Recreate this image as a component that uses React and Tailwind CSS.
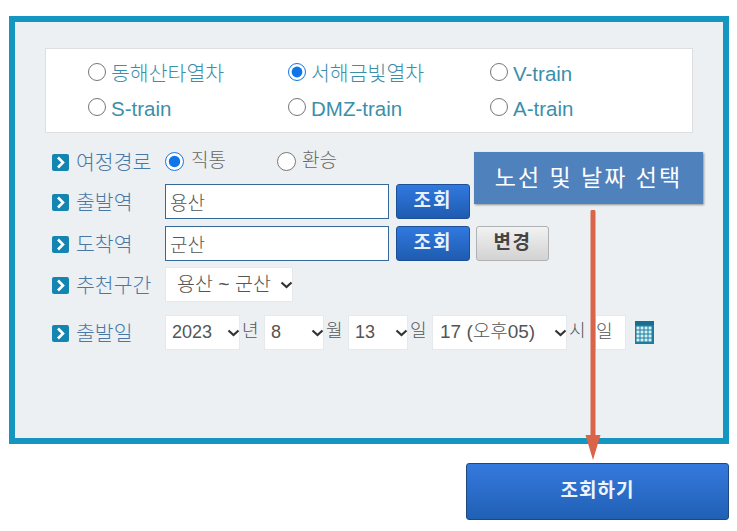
const font = { fontFamily: '"Liberation Sans", "Noto Sans CJK KR", sans-serif' };

const routes = [
  { name: "동해산타열차" },
  { name: "서해금빛열차", checked: true },
  { name: "V-train" },
  { name: "S-train" },
  { name: "DMZ-train" },
  { name: "A-train" },
];

const RowLabel = ({ children }) => (
  <div className="flex w-[120px] shrink-0 items-center pl-[7px]">
    <svg width="17" height="17" viewBox="0 0 17 17" className="relative top-[1px] shrink-0">
      <rect width="17" height="17" rx="2" fill="#1485b0" />
      <path d="M6 3.5 L11 8.5 L6 13.5" fill="none" stroke="#fff" strokeWidth="2.6" />
    </svg>
    <span className="relative top-[2px] ml-[7px] text-[20.5px] leading-none font-light whitespace-nowrap text-[#4a78a6]">{children}</span>
  </div>
);

const BlueButton = ({ children }) => (
  <button className="ml-[7px] h-[35px] w-[74px] rounded-[3px] border border-[#1c4f96] bg-gradient-to-b from-[#3079e0] to-[#1f5cb0] text-[19px] font-bold tracking-[2px] text-[#e8f0fa]">
    {children}
  </button>
);

const TextInput = ({ value }) => (
  <input
    readOnly
    value={value}
    className="h-[35px] w-[224px] border border-[#34699a] bg-white pl-[4px] text-[19px] font-light text-[#555]"
  />
);

const Select = ({ value, width, left = "pl-[2px]", size = "text-[18px]" }) => (
  <div className={`relative h-[35px] ${width}`}>
    <select
      defaultValue={value}
      className={`h-full w-full appearance-none border border-[#e6e9ec] bg-white ${left} ${size} font-light text-[#555]`}
    >
      <option>{value}</option>
    </select>
    <svg width="13" height="8" viewBox="0 0 13 8" className="pointer-events-none absolute top-[14px] right-[0px]">
      <path d="M1.5 1.5 L6.5 6 L11.5 1.5" fill="none" stroke="#333" strokeWidth="2.2" />
    </svg>
  </div>
);

const Unit = ({ children, width }) => (
  <span className={`${width} relative -top-[1px] pl-[2px] text-[18px] font-light text-[#555]`}>{children}</span>
);

export default function App() {
  return (
    <div className="relative h-[531px] w-[737px] overflow-hidden bg-white" style={font}>
      <div className="mt-[16px] ml-[9px] inline-block h-[428px] w-[720px] border-[6px] border-[#1596c1] bg-[#ecf0f3] pt-[26px] pl-[30px]">
        <div className="grid h-[85px] w-[648px] grid-cols-[200px_202px_1fr] content-center gap-y-[14px] border border-[#dcdfe2] bg-white pl-[42px]">
          {routes.map((r) => (
            <label key={r.name} className="flex h-[21px] items-center text-[20.5px] font-light whitespace-nowrap text-[#3b8fab]">
              <input type="radio" name="route" defaultChecked={r.checked} className="relative -top-[1px] m-0 mr-[5px] h-[18px] w-[18px] accent-[#0f75e8]" />
              <span className="relative top-[1px]">{r.name}</span>
            </label>
          ))}
        </div>

        <div className="mt-[17px] flex h-[22px] items-center">
          <RowLabel>여정경로</RowLabel>
          <label className="flex w-[112px] items-center text-[19px] font-light text-[#666]">
            <input type="radio" name="way" defaultChecked className="m-0 mr-[7px] h-[19px] w-[19px] accent-[#0f75e8]" />
            직통
          </label>
          <label className="flex items-center text-[19px] font-light text-[#666]">
            <input type="radio" name="way" className="m-0 mr-[6px] h-[19px] w-[19px] accent-[#0f75e8]" />
            환승
          </label>
        </div>

        <div className="mt-[12px] flex items-center">
          <RowLabel>출발역</RowLabel>
          <TextInput value="용산" />
          <BlueButton>조회</BlueButton>
        </div>

        <div className="mt-[7px] flex items-center">
          <RowLabel>도착역</RowLabel>
          <TextInput value="군산" />
          <BlueButton>조회</BlueButton>
          <button className="ml-[6px] h-[35px] w-[73px] rounded-[3px] border border-[#aeb2b5] bg-gradient-to-b from-[#f2f2f2] to-[#d2d2d2] text-[19px] font-bold tracking-[1.5px] text-[#444]">
            변경
          </button>
        </div>

        <div className="mt-[6px] flex items-center">
          <RowLabel>추천구간</RowLabel>
          <Select value="용산 ~ 군산" width="w-[128px]" left="pl-[11px]" size="text-[19.5px]" />
        </div>

        <div className="mt-[13px] flex items-center">
          <RowLabel>출발일</RowLabel>
          <Select value="2023" width="w-[75px]" left="pl-[6px]" />
          <Unit width="w-[24px]">년</Unit>
          <Select value="8" width="w-[60px]" left="pl-[6px]" />
          <Unit width="w-[24px]">월</Unit>
          <Select value="13" width="w-[60px]" left="pl-[6px]" />
          <Unit width="w-[24px]">일</Unit>
          <Select value="17 (오후05)" width="w-[135px]" left="pl-[7px]" size="text-[19px]" />
          <Unit width="w-[28px]">시</Unit>
          <div className="flex h-[35px] w-[31px] items-center border border-[#e6e9ec] bg-white text-[18px] font-light text-[#555]">일</div>
          <svg width="19" height="23" viewBox="0 0 19 23" className="ml-[9px]">
            <rect width="19" height="23" fill="#1a7f9f" />
            <rect x="0" y="0" width="19" height="4" fill="#146f92" />
            {[1.5, 5.5, 9.5, 13.5].flatMap((x) =>
              [5.5, 9.5, 13.5, 17.5].map((y) => (
                <rect key={`${x}-${y}`} x={x} y={y} width="3" height="3" fill="#d5edf3" />
              )),
            )}
          </svg>
        </div>
      </div>

      <div className="absolute top-[152px] left-[474px] flex h-[52px] w-[229px] items-center justify-center bg-[#4f81bd] text-[23px] tracking-[2px] text-white shadow-[1px_1px_2px_rgba(0,0,0,0.4)]">
        노선 및 날짜 선택
      </div>

      <svg className="absolute top-[210px] left-[584px]" width="18" height="252" viewBox="0 0 18 252">
        <path d="M9 2 V226" stroke="#d9644a" strokeWidth="5" strokeLinecap="round" />
        <path d="M1.5 225 H16.5 L9 250 Z" fill="#d9644a" />
      </svg>

      <button className="absolute top-[463px] left-[466px] h-[57px] w-[263px] rounded-[3px] border border-[#1c4a80] bg-gradient-to-b from-[#3579de] to-[#2060b4] text-[19px] font-bold tracking-[1px] text-[#eef4fb]">
        조회하기
      </button>
    </div>
  );
}
